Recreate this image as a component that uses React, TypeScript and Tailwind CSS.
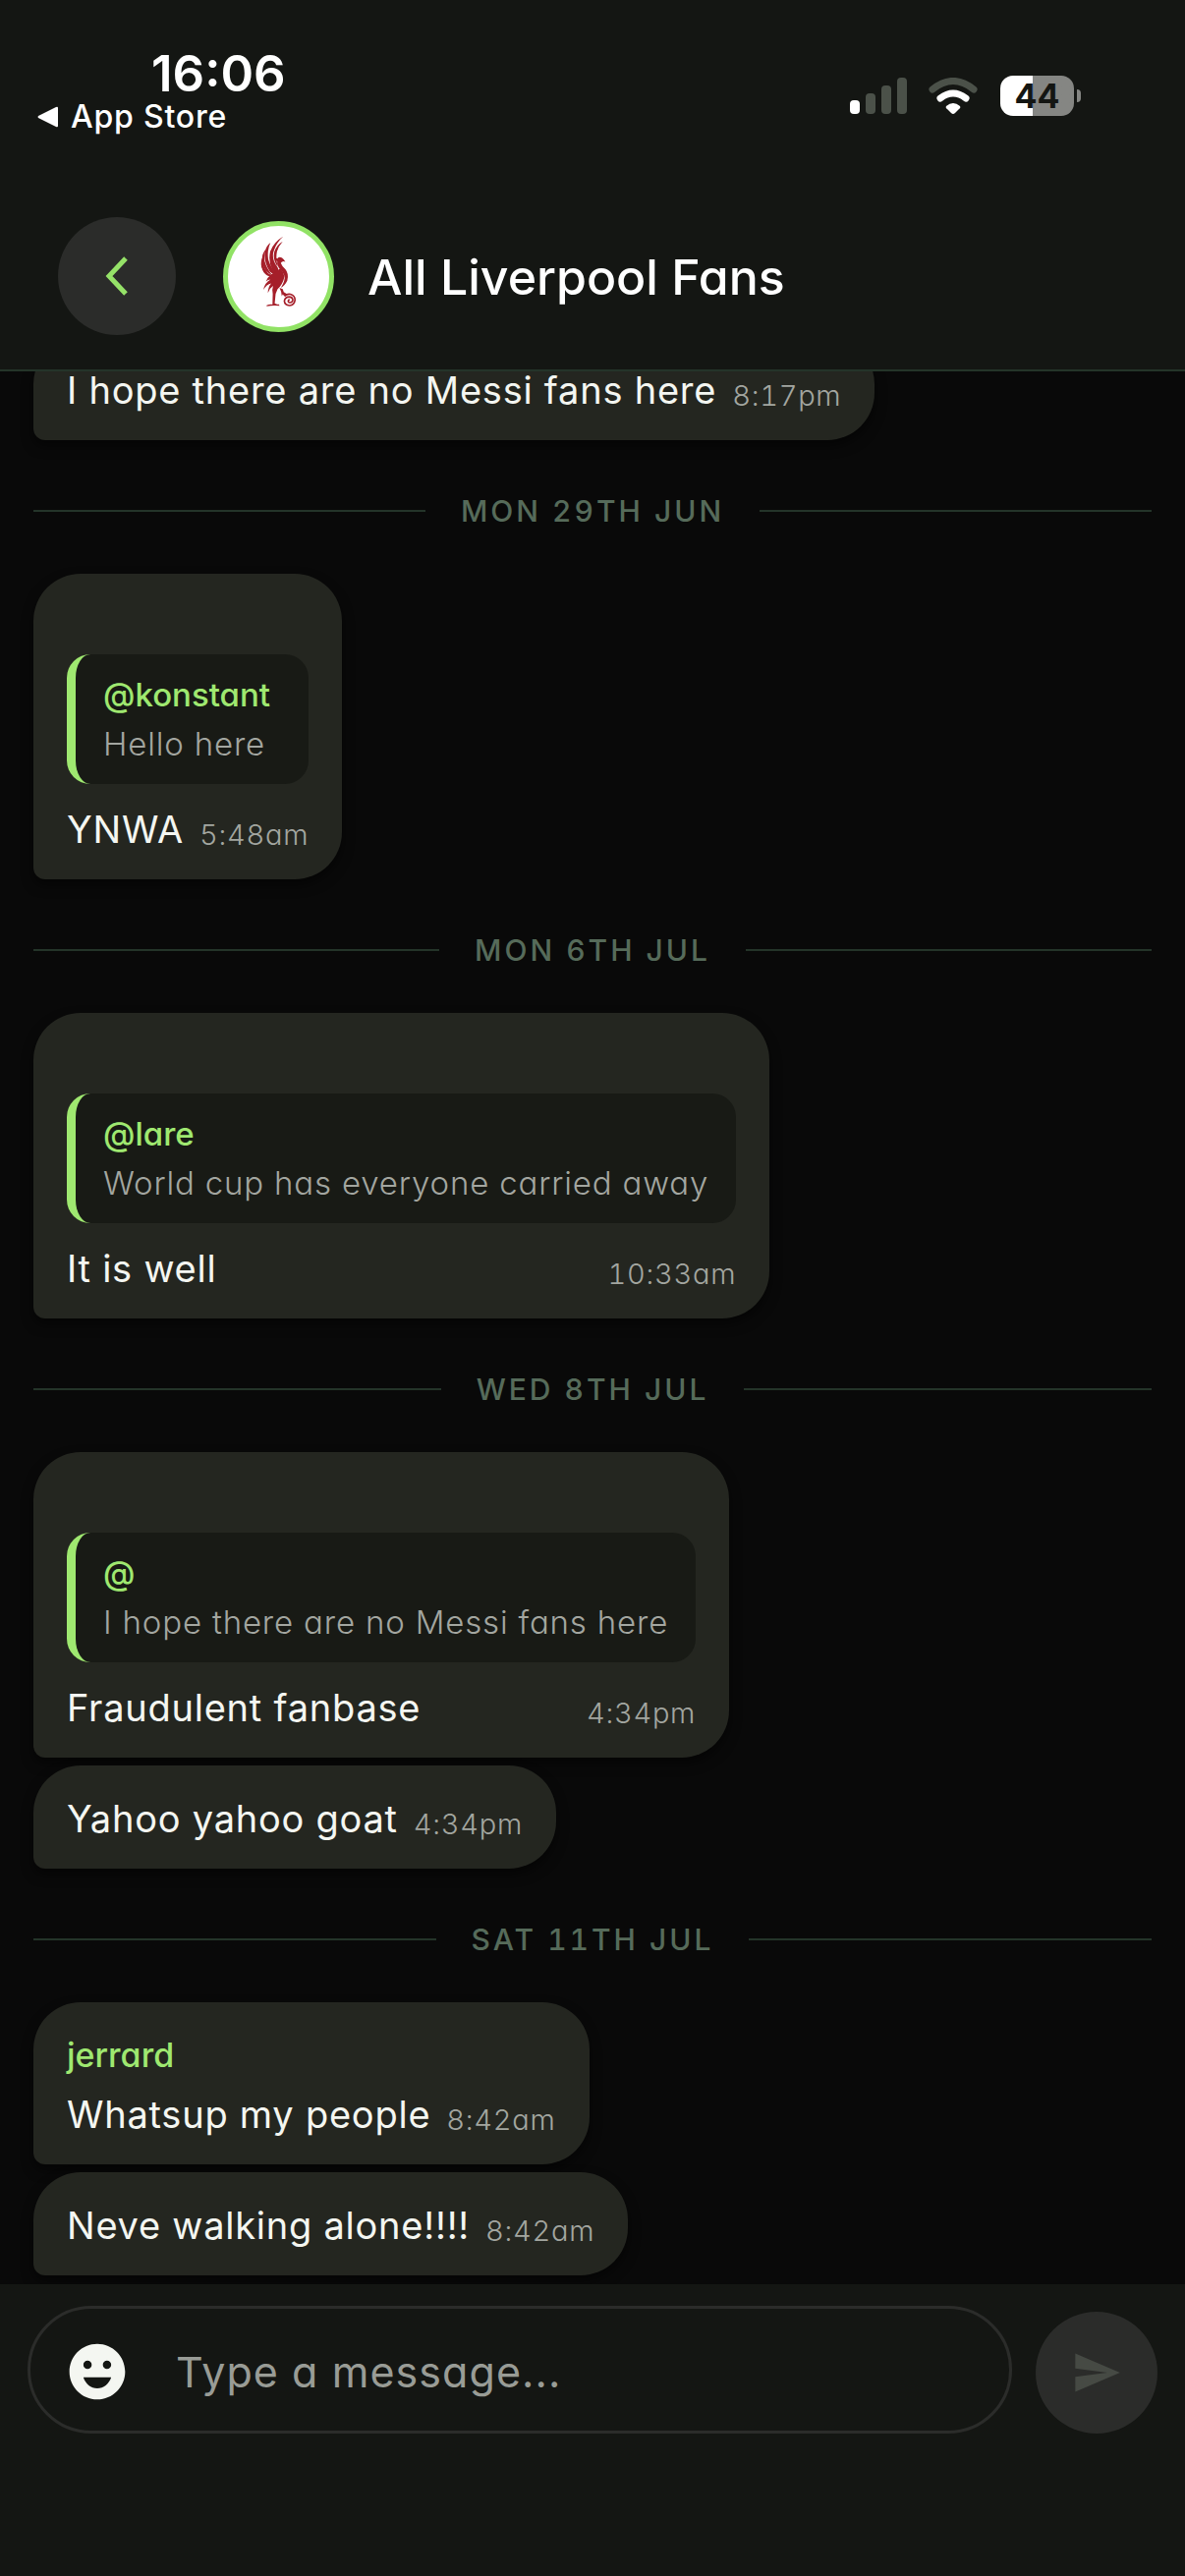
import { MdEmojiEmotions, MdSend } from "react-icons/md";

type Message = {
  id: number;
  text: string;
  time: string;
  // an empty string keeps the line of a sender whose name is unknown
  author?: string;
  quote?: { author: string; text: string };
};

type Day = {
  label?: string;
  messages: Message[];
};

const days: Day[] = [
  {
    messages: [{ id: 1, text: "I hope there are no Messi fans here", time: "8:17pm" }],
  },
  {
    label: "MON 29TH JUN",
    messages: [
      { id: 2, author: "", quote: { author: "@konstant", text: "Hello here" }, text: "YNWA", time: "5:48am" },
    ],
  },
  {
    label: "MON 6TH JUL",
    messages: [
      {
        id: 3,
        author: "",
        quote: { author: "@lare", text: "World cup has everyone carried away" },
        text: "It is well",
        time: "10:33am",
      },
    ],
  },
  {
    label: "WED 8TH JUL",
    messages: [
      {
        id: 4,
        author: "",
        quote: { author: "@", text: "I hope there are no Messi fans here" },
        text: "Fraudulent fanbase",
        time: "4:34pm",
      },
      { id: 5, text: "Yahoo yahoo goat", time: "4:34pm" },
    ],
  },
  {
    label: "SAT 11TH JUL",
    messages: [
      { id: 6, author: "jerrard", text: "Whatsup my people", time: "8:42am" },
      { id: 7, text: "Neve walking alone!!!!", time: "8:42am" },
    ],
  },
];

const StatusBar = () => {
  return (
    <div className="flex items-start justify-between pt-12 pl-[38px] pr-[106px] text-white">
      <div>
        <p className="pl-[116px] text-[51px] leading-[54px] font-semibold">16:06</p>
        <a href="#" className="flex items-center gap-3 text-[32px] leading-[34px] font-medium tracking-wide">
          <svg className="w-[22px] h-[22px]" viewBox="0 0 22 22" fill="currentColor">
            <path d="M1 10 L19 1 Q21 0 21 2 V20 Q21 22 19 21 L1 12 Q0 11 1 10 Z" />
          </svg>
          App Store
        </a>
      </div>
      <div className="flex items-center pt-[29px]">
        <svg className="w-[58px] h-[37px]" viewBox="0 0 58 37">
          <rect x="0" y="23" width="10" height="14" rx="4" fill="#fff" />
          <rect x="16" y="16" width="10" height="21" rx="4" fill="#4b5149" />
          <rect x="32" y="8" width="10" height="29" rx="4" fill="#4b5149" />
          <rect x="48" y="0" width="10" height="37" rx="4" fill="#4b5149" />
        </svg>
        <svg className="ml-[22px] w-[50px] h-[37px]" viewBox="0 0 50 37" fill="none">
          <path d="M4 12 Q25 -5 46 12" stroke="#4b5149" strokeWidth="7" strokeLinecap="round" />
          <path d="M12 21 Q25 11 38 21" stroke="#fff" strokeWidth="7" strokeLinecap="round" />
          <path d="M18 29 Q25 23 32 29 Q33 31 31 32 L27 36 Q25 38 23 36 L19 32 Q17 31 18 29 Z" fill="#fff" />
        </svg>
        <div className="ml-[23px] flex items-center gap-[3px]">
          <span className="flex h-[41px] w-[75px] items-center justify-center rounded-[13px] bg-linear-to-r from-white from-44% to-[#858683] to-44% text-[34px] font-bold text-[#141613]">
            44
          </span>
          <span className="h-[13px] w-1 rounded-r-full bg-[#858683]" />
        </div>
      </div>
    </div>
  );
};

const LiverBird = () => {
  return (
    <svg className="w-full h-full" viewBox="574 86 314 314" fill="#a51f2a">
      {/* wing */}
      <path d="M746 118 Q716 136 705 165 Q698 196 712 222 Q722 238 738 242 L728 214 Q708 188 716 164 Q724 138 746 118 Z" />
      <path d="M744 134 Q724 146 718 166 Q712 190 728 212 Q722 186 726 166 Q731 148 744 134 Z" />
      <path d="M706 138 Q690 150 688 172 Q686 200 704 228 Q718 240 730 240 Q706 216 699 190 Q695 160 706 138 Z" />
      <path d="M692 158 Q678 172 680 196 Q684 226 712 240 Q694 218 688 196 Q685 176 692 158 Z" />
      <path d="M682 182 Q674 196 678 214 Q684 234 706 242 Q690 222 685 210 Q681 198 682 182 Z" />
      <path d="M680 212 Q680 230 696 240 Q708 246 722 244 Q700 236 690 228 Q683 222 680 212 Z" />
      {/* head and neck */}
      <path d="M720 184 L727 187 Q733 180 742 185 Q748 189 752 197 Q742 194 738 201 Q742 212 752 220 Q764 234 758 256 Q750 272 738 278 Q754 254 748 238 Q744 226 732 216 Q724 206 727 196 Q724 194 720 190 Z" />
      {/* body */}
      <path d="M708 236 Q724 230 736 218 Q750 232 748 248 Q744 266 728 282 L722 296 L719 326 L732 332 H712 L713 296 Q710 284 714 272 Q702 280 698 294 Q698 276 708 264 Q694 266 684 284 Q688 262 706 252 Q698 252 692 258 Q696 246 708 236 Z" />
      <path d="M694 332 Q704 328 714 330 L732 329 L734 334 Q714 332 694 335 Z" />
      {/* leg reaching to the ball */}
      <path d="M734 278 L744 282 L747 291 L757 297 L749 304 L744 298 L741 304 L739 290 Z" />
      <path
        d="M750 304 Q756 296 768 298 Q782 302 782 316 Q780 332 765 333 Q750 332 749 319 Q751 306 765 306 Q776 308 775 318 Q771 326 763 323 Q758 318 765 314"
        fill="none"
        stroke="#a51f2a"
        strokeWidth="5"
      />
    </svg>
  );
};

const ChatHeader = () => {
  return (
    <header className="shrink-0 border-b-2 border-[#243429] bg-[#141613]">
      <StatusBar />
      <div className="flex items-center pt-[85px] pb-[35px] pl-[59px] pr-8">
        <button
          type="button"
          aria-label="Back"
          className="flex h-[120px] w-[120px] items-center justify-center rounded-full bg-[#2b2c2a]"
        >
          <svg className="w-[24px] h-[40px]" viewBox="0 0 24 40" fill="none" stroke="#95e268" strokeWidth="5">
            <path d="M21 2 L4 20 L21 38" />
          </svg>
        </button>
        <div className="ml-12 h-[113px] w-[113px] overflow-hidden rounded-full border-[5px] border-[#91e265] bg-white">
          <LiverBird />
        </div>
        <h1 className="ml-[34px] pt-[2px] text-[50px] leading-[60px] font-medium text-white">All Liverpool Fans</h1>
      </div>
    </header>
  );
};

const DateDivider = ({ label }: { label: string }) => {
  return (
    <div className="flex items-center gap-9 pt-[52px] pb-11">
      <span className="h-[2px] flex-1 bg-[#243429]" />
      <span className="text-[30px] leading-10 font-medium tracking-widest text-[#566b5a] tabular-nums">{label}</span>
      <span className="h-[2px] flex-1 bg-[#243429]" />
    </div>
  );
};

const MessageBubble = ({ message }: { message: Message }) => {
  const { author, quote, text, time } = message;

  return (
    <div className="flex max-w-[85%] flex-col rounded-[48px] rounded-bl-xl bg-[#242620] pt-[30px] pr-[34px] pb-[27px] pl-[34px] shadow-[0_6px_12px_rgba(0,0,0,0.5)]">
      {author !== undefined && (
        <p className="h-12 text-[34px] leading-[48px] font-medium text-[#9fe870]">{author}</p>
      )}
      {quote && (
        <blockquote className="mt-1 mb-[10px] rounded-3xl border-l-9 border-[#9fe870] bg-[#181a15] py-4 pr-7 pl-7 text-[33px] leading-[50px]">
          <p className="font-medium text-[#9fe870]">{quote.author}</p>
          <p className="font-light tracking-wide text-[#a3a6a0]">{quote.text}</p>
        </blockquote>
      )}
      <div className={author !== undefined ? "mt-3 flex items-end justify-between gap-4" : "flex items-end justify-between gap-4"}>
        <p className="text-[38px] leading-[48px] tracking-[0.02em] text-[#f4f6f1] [font-feature-settings:normal]">{text}</p>
        <time className="text-[29px] leading-9 font-light tracking-wide text-[#a3a6a0] tabular-nums">{time}</time>
      </div>
    </div>
  );
};

const Composer = () => {
  return (
    <form className="flex shrink-0 items-end gap-6 bg-[#141613] px-7 pt-[22px] pb-[145px]">
      <div className="flex h-[130px] flex-1 items-center gap-[46px] rounded-full border-3 border-[#2b2c2a] pl-[34px] pr-10">
        <button type="button" aria-label="Emoji" className="pt-1 text-[#f4f6f1]">
          <MdEmojiEmotions className="h-[68px] w-[68px]" />
        </button>
        <input
          type="text"
          aria-label="Message"
          placeholder="Type a message..."
          className="min-w-0 flex-1 bg-transparent pt-1 text-[43px] leading-[60px] tracking-wide text-[#f4f6f1] outline-none placeholder:text-[#999c96]"
        />
      </div>
      <button
        type="submit"
        aria-label="Send"
        className="flex h-[124px] w-[124px] items-center justify-center rounded-full bg-[#2b2c2a] text-[#464a44]"
      >
        <MdSend className="h-[52px] w-[52px]" />
      </button>
    </form>
  );
};

export default function App() {
  return (
    <div className="flex h-screen flex-col bg-[#090909] font-[Inter,sans-serif] [font-feature-settings:'cv11']">
      <ChatHeader />
      {/* column-reverse keeps the list scrolled to the newest message */}
      <main className="flex min-h-0 flex-1 flex-col-reverse overflow-y-auto [scrollbar-width:none]">
        <div className="px-[34px] pb-[9px]">
          {days.map((day, index) => (
            <section key={index}>
              {day.label && <DateDivider label={day.label} />}
              <div className="flex flex-col items-start gap-2">
                {day.messages.map((message) => (
                  <MessageBubble key={message.id} message={message} />
                ))}
              </div>
            </section>
          ))}
        </div>
      </main>
      <Composer />
    </div>
  );
}
